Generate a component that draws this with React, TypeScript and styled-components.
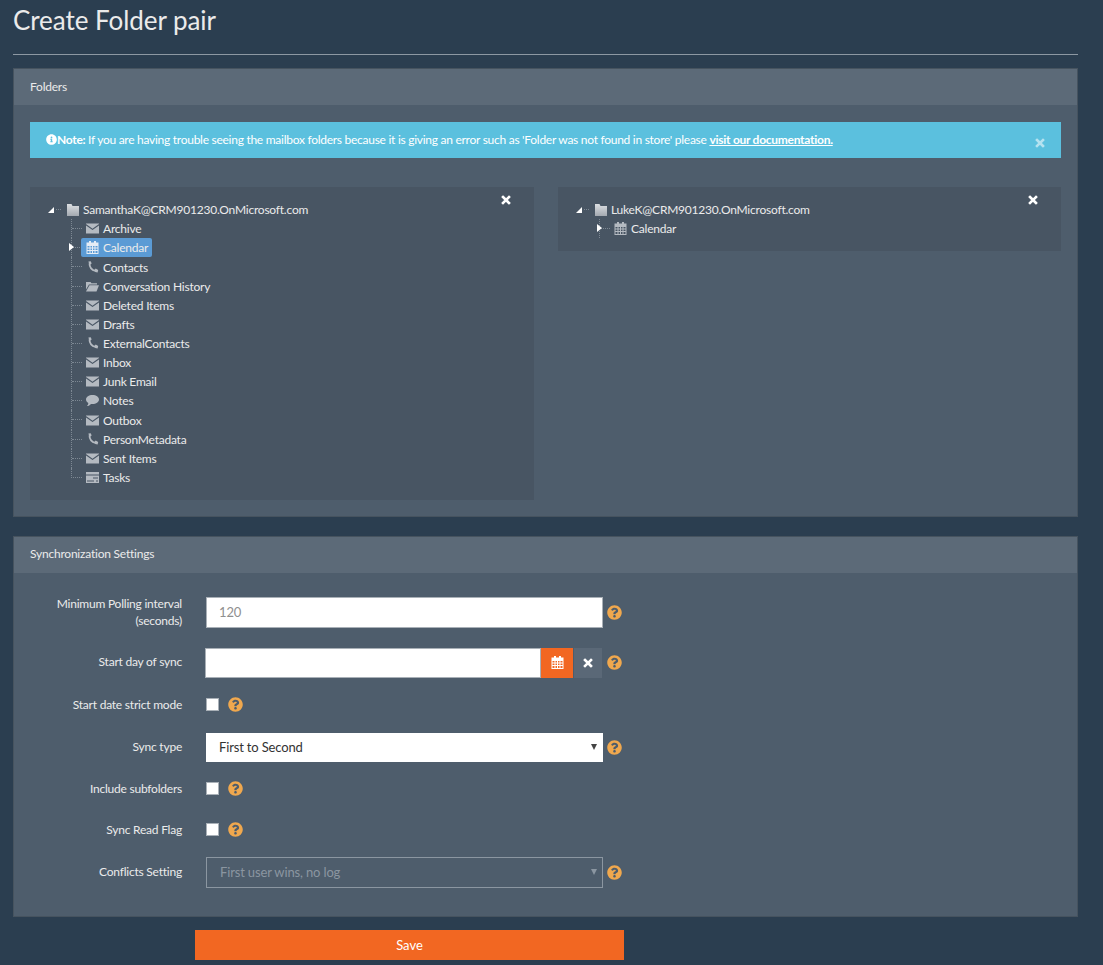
import React from 'react';
import styled, { createGlobalStyle } from 'styled-components';
import { FaInfoCircle, FaQuestionCircle } from 'react-icons/fa';

const GlobalStyle = createGlobalStyle`
  html, body {
    margin: 0;
    padding: 0;
    height: 965px;
    overflow: hidden;
    background: #2b3e50;
    color: #ebebeb;
    font-family: Lato, "Liberation Sans", sans-serif;
    font-size: 12px;
    letter-spacing: -0.22px;
  }
  * {
    box-sizing: border-box;
  }
`;

const Page = styled.div`
  padding: 0 25px 0 13px;
`;

const Title = styled.h1`
  margin: 0;
  height: 55px;
  padding-top: 2px;
  font-size: 26px;
  line-height: 36px;
  font-weight: 400;
  letter-spacing: -0.05px;
  color: #ebebeb;
  border-bottom: 1px solid #8d98a3;
`;

const Panel = styled.section`
  margin-top: ${({ $top }: { $top: number }) => $top}px;
  background: #4e5d6c;
  border: 1px solid #46535f;
`;

const PanelHeading = styled.div`
  height: 36px;
  padding: 0 0 2px 16px;
  display: flex;
  align-items: center;
  background: #5c6a78;
  font-size: 12px;
  color: #ebebeb;
`;

const FoldersBody = styled.div`
  padding: 17px 16px 16px;
`;

const Alert = styled.div`
  height: 36px;
  padding: 0 16px;
  display: flex;
  align-items: center;
  justify-content: space-between;
  background: #5bc0de;
  color: #fff;
`;

const AlertText = styled.div`
  display: flex;
  align-items: center;
  margin-top: -1px;
  white-space: pre;
  letter-spacing: -0.27px;

  svg {
    width: 11px;
    height: 11px;
  }
  b {
    font-weight: 700;
  }
  a {
    color: #fff;
    font-weight: 700;
    text-decoration: underline;
  }
`;

const AlertClose = styled.span`
  display: flex;
  margin: 5px 0 0;
  opacity: 0.55;
  color: #fff;
`;

const Wells = styled.div`
  margin-top: 29px;
  display: grid;
  grid-template-columns: 504px 503px;
  gap: 24px;
  align-items: start;
`;

const Well = styled.div`
  position: relative;
  padding: 13px 0 13px 18px;
  background: #485563;
`;

const WellClose = styled.span`
  position: absolute;
  top: 8px;
  right: 23px;
  display: flex;
  color: #fff;
`;

const RootRow = styled.div`
  height: 19.2px;
  display: flex;
  align-items: center;
  color: #ebebeb;
`;

const RootArrow = styled.span`
  width: 0;
  height: 0;
  border-style: solid;
  border-width: 0 0 6px 6px;
  border-color: transparent transparent #fff transparent;
`;

const RootDash = styled.span`
  width: 5px;
  margin: 0 6px 0 2px;
  border-top: 1px dotted #7d8893;
`;

const RootLabel = styled.span`
  margin-left: 4px;
`;

const ChildList = styled.ul`
  list-style: none;
  margin: 0 0 0 23px;
  padding: 0;
`;

const ChildRow = styled.li<{ $end?: boolean }>`
  position: relative;
  height: 19.14px;
  display: flex;
  align-items: center;
  border-left: 1px dotted ${({ $end }) => ($end ? 'transparent' : '#7d8893')};
`;

const Connector = styled.span<{ $end?: boolean }>`
  align-self: flex-start;
  flex: none;
  width: ${({ $end }) => ($end ? 11 : 10)}px;
  height: 10px;
  margin-left: ${({ $end }) => ($end ? -1 : 0)}px;
  border-bottom: 1px dotted #7d8893;
  border-left: ${({ $end }) => ($end ? '1px dotted #7d8893' : '0')};
`;

const ExpandArrow = styled.span`
  position: absolute;
  left: -3px;
  top: 5px;
  width: 0;
  height: 0;
  border-style: solid;
  border-width: 4.5px 0 4.5px 5px;
  border-color: transparent transparent transparent #fff;
`;

const Node = styled.span<{ $selected?: boolean }>`
  height: 19px;
  padding: 0 4px 0 5px;
  margin-left: -1px;
  display: flex;
  align-items: center;
  gap: 4px;
  color: #ebebeb;
  border-radius: 2px;
  background: ${({ $selected }) => ($selected ? '#5b9bd5' : 'transparent')};
`;

const IconBox = styled.svg`
  width: 13px;
  height: 13px;
  flex: none;
  color: #b4bac1;
  fill: currentColor;
`;

const SelectedIcon = styled(IconBox)`
  color: #e6edf5;
`;

const WhiteIcon = styled(IconBox)`
  color: #fff;
`;

const SettingsBody = styled.div`
  padding: 24px 0 28px;
`;

const Row = styled.div<{ $gap?: number }>`
  display: grid;
  grid-template-columns: 168px 1fr;
  column-gap: 24px;
  align-items: center;
  margin-bottom: ${({ $gap }) => $gap ?? 0}px;
`;

const Label = styled.label`
  margin: -2px 0;
  text-align: right;
  line-height: 17px;
  color: #ebebeb;
`;

const RaisedLabel = styled(Label)`
  margin: -3px 0 -1px;
`;

const Control = styled.div`
  display: flex;
  align-items: center;
  gap: 4px;
`;

const TextInput = styled.input`
  width: 397px;
  height: 31px;
  padding: 0 12px;
  font: 13px Lato, "Liberation Sans", sans-serif;
  letter-spacing: -0.15px;
  color: #333;
  background: #fff;
  border: 1px solid #a9b0b7;
  border-radius: 0;
  outline: none;

  &::placeholder {
    color: #8f8f8f;
  }
`;

const DateGroup = styled.div`
  display: flex;
  margin-left: -1px;
`;

const DateInput = styled(TextInput)`
  width: 336px;
  height: 30px;
`;

const DateButton = styled.button<{ $orange?: boolean }>`
  width: ${({ $orange }) => ($orange ? 32 : 28)}px;
  height: 30px;
  margin-left: ${({ $orange }) => ($orange ? 0 : 1)}px;
  padding: 0;
  display: flex;
  align-items: center;
  justify-content: center;
  border: 0;
  color: #fff;
  background: ${({ $orange }) => ($orange ? '#f26722' : '#5a6877')};
`;

const SelectWrap = styled.div<{ $disabled?: boolean }>`
  position: relative;
  width: 397px;

  &::after {
    content: '';
    position: absolute;
    right: 6px;
    top: 50%;
    margin-top: -3px;
    border-style: solid;
    border-width: 6px 3px 0 3px;
    border-color: ${({ $disabled }) => ($disabled ? '#8b96a1' : '#444')} transparent transparent transparent;
  }
`;

const Select = styled.select<{ $height: number }>`
  width: 100%;
  height: ${({ $height }) => $height}px;
  padding: 0 13px;
  display: block;
  appearance: none;
  font: 13px Lato, "Liberation Sans", sans-serif;
  letter-spacing: -0.15px;
  color: #333;
  background: #fff;
  border: 0;
  border-radius: 0;
  outline: none;

  &:disabled {
    opacity: 1;
    color: #8b96a1;
    background: transparent;
    border: 1px solid #8b96a1;
  }
`;

const CheckRow = styled.div`
  height: 26px;
  display: flex;
  align-items: center;
  gap: 9px;
`;

const Check = styled.input`
  appearance: none;
  width: 13px;
  height: 13px;
  margin: 0;
  background: #fff;
  border: 1px solid #a9b0b7;
`;

const Help = styled(FaQuestionCircle)`
  width: 15px;
  height: 15px;
  color: #f0a84e;
  flex: none;
`;

const DateHelp = styled(Help)`
  margin: -1px 0 0 1px;
`;

const SaveRow = styled.div`
  margin: 13px 0 0 182px;
`;

const SaveButton = styled.button`
  width: 429px;
  height: 30px;
  border: 0;
  color: #fff;
  background: #f26722;
  font: 13px Lato, "Liberation Sans", sans-serif;
`;

const Cross = () => (
  <svg width="10" height="10" viewBox="0 0 10 10" aria-hidden="true">
    <path d="M2 2l6 6M8 2l-6 6" stroke="currentColor" strokeWidth="2.6" strokeLinecap="square" />
  </svg>
);

type IconName = 'mail' | 'calendar' | 'phone' | 'open' | 'note' | 'tasks';

const iconPaths: Record<IconName, React.ReactNode> = {
  mail: (
    <>
      <path d="M0 1.5h13v.6L6.500 6.800 0 2.100z" />
      <path d="M0 3.400l6.500 4.700 6.500-4.700V11.500H0z" />
    </>
  ),
  calendar: (
    <path
      fillRule="evenodd"
      d="M3 0h2v1.500h3V0h2v1.500h2.500V13H.5V1.500H3zM1.500 5v1.500h2V5zm3 0v1.500h1.500V5zm2.500 0v1.500h1.500V5zm2.500 0v1.500h2V5zm-8 2.500V9h2V7.500zm3 0V9h1.500V7.500zm2.500 0V9h1.500V7.500zm2.500 0V9h2V7.500zm-8 2.500v2h2v-2zm3 0v2h1.500v-2zm2.500 0v2h1.500v-2zm2.500 0v2h2v-2z"
    />
  ),
  phone: (
    <>
      <path d="M3.500 2.500C3.500 6 6 9 9.500 10" fill="none" stroke="currentColor" strokeWidth="1.800" />
      <path d="M2.400.600l2.300-.400 1 2.400-2.300 1.300zM8.200 9.100l1.500-1.500 2.500 1.400-.6 2.400-2.400-.300z" />
    </>
  ),
  open: (
    <>
      <path d="M0 2h4.500l1 1.200H11v1.300H3L0 9.500z" />
      <path d="M3.500 5.300H13L10.500 11.500H0z" />
    </>
  ),
  note: <path d="M6.500 1C10.100 1 13 3 13 5.500S10.100 10 6.500 10c-.5 0-1 0-1.500-.1C4 11.100 2.500 12 1 12c.8-.8 1.300-1.800 1.300-3C.9 8.200 0 6.900 0 5.500 0 3 2.900 1 6.500 1z" />,
  tasks: (
    <path
      fillRule="evenodd"
      d="M0 1h13v2.500H0zM0 4.500h13V12H0zm7 2v1h5v-1zm-6 3v1h7v-1zm9 0v1h2v-1z"
    />
  ),
};

const Icon = ({ name, selected }: { name: IconName; selected?: boolean }) => {
  const Svg = selected ? SelectedIcon : IconBox;
  return <Svg viewBox="0 0 13 13">{iconPaths[name]}</Svg>;
};

const RootFolder = () => (
  <svg width="12" height="13" viewBox="0 0 12 13" aria-hidden="true">
    <defs>
      <linearGradient id="rootFolder" x1="0" y1="0" x2="0" y2="1">
        <stop offset="0" stopColor="#dcdfe2" />
        <stop offset="1" stopColor="#a3a9b0" />
      </linearGradient>
    </defs>
    <path d="M0 3V1h4.500l1 2H12v10H0z" fill="url(#rootFolder)" />
  </svg>
);

type Folder = { label: string; icon: IconName; selected?: boolean; expandable?: boolean };

const leftFolders: Folder[] = [
  { label: 'Archive', icon: 'mail' },
  { label: 'Calendar', icon: 'calendar', selected: true, expandable: true },
  { label: 'Contacts', icon: 'phone' },
  { label: 'Conversation History', icon: 'open' },
  { label: 'Deleted Items', icon: 'mail' },
  { label: 'Drafts', icon: 'mail' },
  { label: 'ExternalContacts', icon: 'phone' },
  { label: 'Inbox', icon: 'mail' },
  { label: 'Junk Email', icon: 'mail' },
  { label: 'Notes', icon: 'note' },
  { label: 'Outbox', icon: 'mail' },
  { label: 'PersonMetadata', icon: 'phone' },
  { label: 'Sent Items', icon: 'mail' },
  { label: 'Tasks', icon: 'tasks' },
];

const rightFolders: Folder[] = [{ label: 'Calendar', icon: 'calendar', expandable: true }];

const FolderTree = ({ account, folders }: { account: string; folders: Folder[] }) => (
  <Well>
    <WellClose>
      <Cross />
    </WellClose>
    <RootRow>
      <RootArrow />
      <RootDash />
      <RootFolder />
      <RootLabel>{account}</RootLabel>
    </RootRow>
    <ChildList>
      {folders.map((folder, index) => {
        const end = index === folders.length - 1 && !folder.expandable;
        return (
          <ChildRow key={folder.label} $end={end}>
            <Connector $end={end} />
            {folder.expandable && <ExpandArrow />}
            <Node $selected={folder.selected}>
              <Icon name={folder.icon} selected={folder.selected} />
              {folder.label}
            </Node>
          </ChildRow>
        );
      })}
    </ChildList>
  </Well>
);

const App = () => (
  <Page>
    <GlobalStyle />
    <Title>Create Folder pair</Title>

    <Panel $top={13}>
      <PanelHeading>Folders</PanelHeading>
      <FoldersBody>
        <Alert>
          <AlertText>
            <FaInfoCircle />
            <b>Note: </b>
            If you are having trouble seeing the mailbox folders because it is giving an error such as 'Folder was not
            found in store' please <a href="#docs">visit our documentation.</a>
          </AlertText>
          <AlertClose>
            <Cross />
          </AlertClose>
        </Alert>
        <Wells>
          <FolderTree account="SamanthaK@CRM901230.OnMicrosoft.com" folders={leftFolders} />
          <FolderTree account="LukeK@CRM901230.OnMicrosoft.com" folders={rightFolders} />
        </Wells>
      </FoldersBody>
    </Panel>

    <Panel $top={19}>
      <PanelHeading>Synchronization Settings</PanelHeading>
      <SettingsBody>
        <Row $gap={20}>
          <Label>
            Minimum Polling interval
            <br />
            (seconds)
          </Label>
          <Control>
            <TextInput placeholder="120" />
            <Help />
          </Control>
        </Row>
        <Row $gap={14}>
          <RaisedLabel>Start day of sync</RaisedLabel>
          <Control>
            <DateGroup>
              <DateInput />
              <DateButton $orange>
                <WhiteIcon viewBox="0 0 13 13">{iconPaths.calendar}</WhiteIcon>
              </DateButton>
              <DateButton>
                <Cross />
              </DateButton>
            </DateGroup>
            <DateHelp />
          </Control>
        </Row>
        <Row $gap={15}>
          <Label>Start date strict mode</Label>
          <CheckRow>
            <Check type="checkbox" />
            <Help />
          </CheckRow>
        </Row>
        <Row $gap={14}>
          <RaisedLabel>Sync type</RaisedLabel>
          <Control>
            <SelectWrap>
              <Select $height={29} defaultValue="first">
                <option value="first">First to Second</option>
                <option value="second">Second to First</option>
              </Select>
            </SelectWrap>
            <Help />
          </Control>
        </Row>
        <Row $gap={15}>
          <Label>Include subfolders</Label>
          <CheckRow>
            <Check type="checkbox" />
            <Help />
          </CheckRow>
        </Row>
        <Row $gap={14}>
          <Label>Sync Read Flag</Label>
          <CheckRow>
            <Check type="checkbox" />
            <Help />
          </CheckRow>
        </Row>
        <Row>
          <RaisedLabel>Conflicts Setting</RaisedLabel>
          <Control>
            <SelectWrap $disabled>
              <Select $height={31} disabled defaultValue="first">
                <option value="first">First user wins, no log</option>
              </Select>
            </SelectWrap>
            <Help />
          </Control>
        </Row>
      </SettingsBody>
    </Panel>

    <SaveRow>
      <SaveButton>Save</SaveButton>
    </SaveRow>
  </Page>
);

export default App;
